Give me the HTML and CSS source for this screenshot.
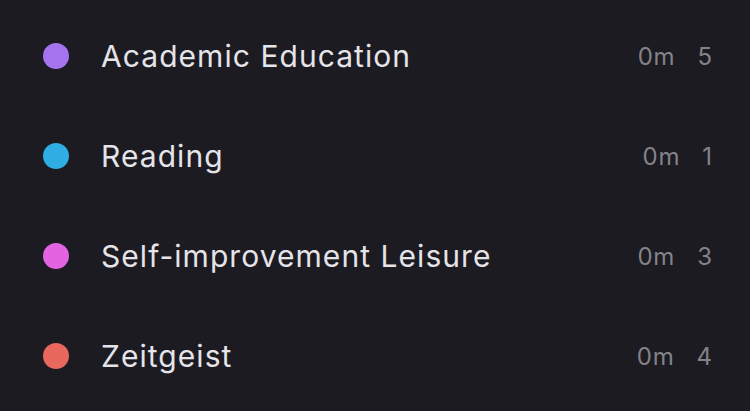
FILE: index.html
```html
<!DOCTYPE html>
<html>
<head>
<meta charset="utf-8">
<link rel="stylesheet" href="styles.css">
</head>
<body>
<ul class="list">
  <li class="row">
    <span class="dot purple"></span>
    <span class="name">Academic Education</span>
    <span class="meta"><span class="time">0m</span><span class="count">5</span></span>
  </li>
  <li class="row">
    <span class="dot blue"></span>
    <span class="name">Reading</span>
    <span class="meta"><span class="time">0m</span><span class="count">1</span></span>
  </li>
  <li class="row">
    <span class="dot pink"></span>
    <span class="name">Self-improvement Leisure</span>
    <span class="meta"><span class="time">0m</span><span class="count">3</span></span>
  </li>
  <li class="row">
    <span class="dot coral"></span>
    <span class="name">Zeitgeist</span>
    <span class="meta"><span class="time">0m</span><span class="count">4</span></span>
  </li>
</ul>
</body>
</html>
```
FILE: styles.css
```css
html, body {
  margin: 0;
  padding: 0;
  background: #1c1b21;
  width: 750px;
  height: 411px;
  overflow: hidden;
}
body {
  font-family: Inter, "Noto Sans", sans-serif;
  color: #e5e4e9;
  padding-top: 6px;
  box-sizing: border-box;
}
.list {
  list-style: none;
  margin: 0;
  padding: 0;
}
.row {
  height: 100px;
  display: flex;
  align-items: center;
  padding: 0 38px 0 43px;
}
.dot {
  width: 26px;
  height: 26px;
  border-radius: 50%;
  flex: none;
}
.purple { background: #a673ee; }
.blue { background: #2eaee3; }
.pink { background: #e363e0; }
.coral { background: #e8685e; }
.name {
  margin-left: 32px;
  font-size: 30px;
  letter-spacing: 1.05px;
  flex: 1;
}
.meta {
  display: flex;
  gap: 22px;
  font-size: 24px;
  color: #838289;
}
.time {
  letter-spacing: 0.8px;
}
```
